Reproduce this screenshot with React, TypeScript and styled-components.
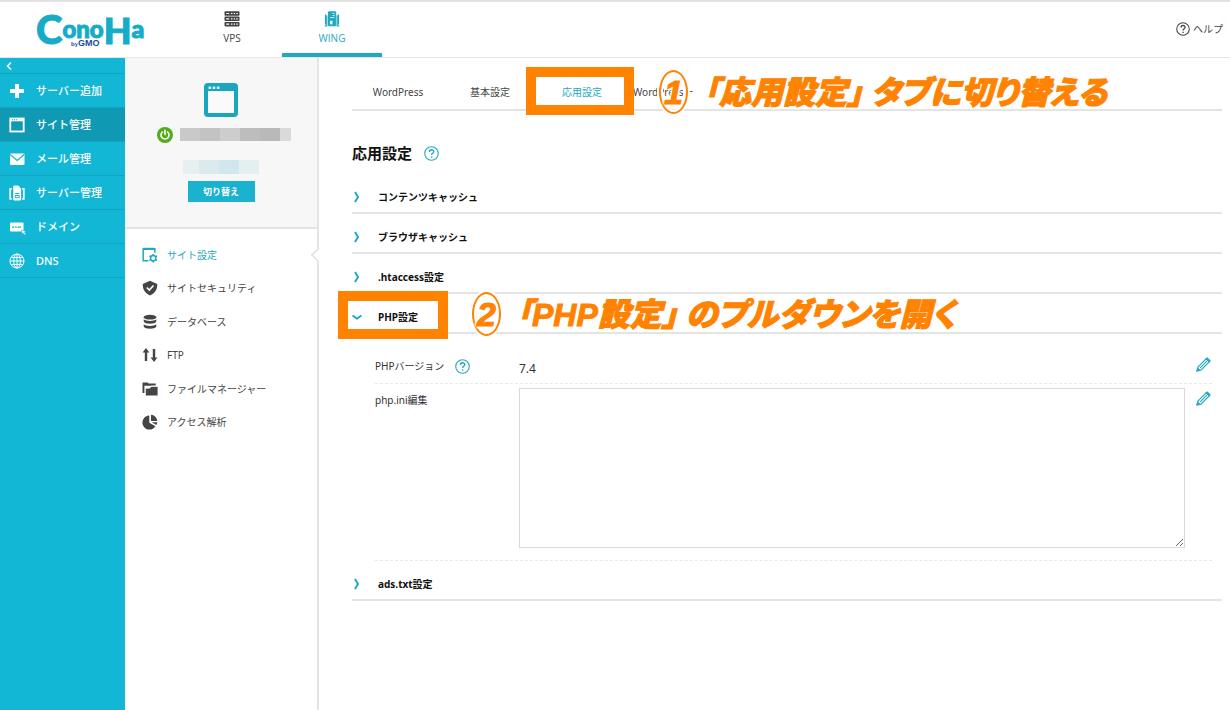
import React from 'react';
import styled, { createGlobalStyle } from 'styled-components';

const teal = '#1fa9c0';
const orange = '#ff8200';
const line = '#e4e4e4';
const jp = '"Noto Sans", "Noto Sans CJK JP", sans-serif';

const GlobalStyle = createGlobalStyle`
  *, *::before, *::after { box-sizing: border-box; }
  body { margin: 0; background: #fff; color: #333; font: 10px/16px ${jp}; }
  ul { list-style: none; margin: 0; padding: 0; }
  a { color: inherit; text-decoration: none; }
  button { font: inherit; color: inherit; background: none; border: 0; padding: 0; cursor: pointer; }
  svg { display: block; flex: none; }
`;

const Page = styled.div`
  min-height: 100vh;
  display: flex;
  flex-direction: column;
  overflow-x: hidden;
`;

const Header = styled.header`
  height: 58px;
  display: flex;
  align-items: stretch;
  border-top: 2px solid #e2e2e2;
  border-bottom: 1px solid #e6e6e6;
`;

const LogoLink = styled.a`
  width: 182px;
  padding: 0 0 0 36px;
`;

const ServiceNav = styled.nav`
  display: flex;
`;

const ServiceLink = styled.a<{ $active?: boolean }>`
  width: 100px;
  display: flex;
  flex-direction: column;
  align-items: center;
  gap: 3px;
  padding-top: 9px;
  color: ${p => (p.$active ? teal : '#444')};
  font-family: "Open Sans", "Noto Sans CJK JP", sans-serif;
  border-bottom: 4px solid ${p => (p.$active ? teal : 'transparent')};
`;

const HelpLink = styled.a`
  margin-left: auto;
  margin-right: 7px;
  padding-bottom: 2px;
  display: flex;
  align-items: center;
  gap: 3px;
  color: #444;
`;

const Body = styled.div`
  flex: 1;
  display: flex;
`;

const Sidebar = styled.nav`
  width: 125px;
  flex: none;
  background: #12b7d6;
  color: #fff;
`;

const Collapse = styled.button`
  display: flex;
  align-items: center;
  width: 100%;
  height: 16px;
  padding-left: 6px;
  border-bottom: 1px solid #10a5c1;
`;

const SideLink = styled.a<{ $active?: boolean }>`
  display: flex;
  align-items: center;
  gap: 11px;
  height: 34px;
  padding-left: 9px;
  border-bottom: 1px solid #10a5c1;
  background: ${p => (p.$active ? '#1099b3' : 'transparent')};
  font-size: 11px;
  font-weight: 500;
`;

const SitePanel = styled.aside`
  width: 194px;
  flex: none;
  border-right: 2px solid ${line};
`;

const SiteCard = styled.div`
  height: 171px;
  display: flex;
  flex-direction: column;
  align-items: center;
  padding-top: 25px;
  background: #f7f7f7;
  border-bottom: 2px solid ${line};
`;

const SiteStatus = styled.div`
  display: flex;
  align-items: center;
  gap: 7px;
  margin-top: 9px;
  padding-left: 6px;
  height: 17px;
`;

const Mosaic = styled.div<{ $height: number }>`
  display: flex;
  height: ${p => p.$height}px;
`;

const Tile = styled.span<{ $width: number; $tone: string }>`
  width: ${p => p.$width}px;
  background: ${p => p.$tone};
`;

const Alias = styled.div`
  margin: 17px 0 7px;
`;

const SwitchButton = styled.button`
  width: 67px;
  height: 21px;
  background: #1bb2cf;
  color: #fff;
  font-size: 9px;
  font-weight: 700;
`;

const SiteMenu = styled.ul`
  display: grid;
  height: 201px;
  margin-top: 9px;
`;

const SiteMenuItem = styled.li`
  position: relative;
  display: flex;
`;

const SiteMenuLink = styled.a<{ $active?: boolean }>`
  flex: 1;
  display: flex;
  align-items: center;
  gap: 9px;
  padding-left: 17px;
  color: ${p => (p.$active ? teal : '#444')};
`;

const Notch = styled.span`
  position: absolute;
  right: -8px;
  top: 11px;
  width: 12px;
  height: 12px;
  background: #fff;
  border: solid ${line};
  border-width: 0 0 2px 2px;
  transform: rotate(45deg);
  clip-path: polygon(0 0, 100% 100%, 0 100%);
`;

const Main = styled.main`
  flex: 1;
  min-width: 0;
  padding: 14px 8px 40px 33px;
`;

const Tabs = styled.nav`
  position: relative;
  display: flex;
  height: 39px;
  padding-top: 2px;
  border-bottom: 2px solid ${line};
`;

const Tab = styled.a<{ $active?: boolean }>`
  position: relative;
  min-width: 92px;
  display: flex;
  align-items: center;
  justify-content: center;
  white-space: nowrap;
  padding: 0 5px;
  color: ${p => (p.$active ? teal : '#444')};

  &:last-of-type { min-width: 0; }
`;

const Frame = styled.span`
  position: absolute;
  z-index: 1;
  left: -10px;
  top: -7px;
  width: 108px;
  height: 48px;
  border: 10px solid ${orange};
  pointer-events: none;
`;

const RowFrame = styled(Frame)`
  left: -14px;
  top: -3px;
  width: 110px;
`;

const Callout = styled.p<{ $left: number }>`
  position: absolute;
  z-index: 2;
  left: ${p => p.$left}px;
  top: -2px;
  display: flex;
  align-items: flex-start;
  margin: 0;
  color: ${orange};
  font: italic 900 32px/40px "Noto Sans CJK JP", sans-serif;
  font-feature-settings: "palt";
  white-space: nowrap;
  -webkit-text-stroke: 1px ${orange};
  text-shadow: 0 0 3px #fff, 2px 0 2px #fff, -2px 0 2px #fff, 0 2px 2px #fff, 0 -2px 2px #fff;
  pointer-events: none;
`;

const Step = styled.span`
  width: 29px;
  height: 44px;
  flex: none;
  margin-right: 15px;
  border: 2px solid ${orange};
  border-radius: 50%;
  box-shadow: 0 0 0 2px #fff, inset 0 0 0 2px #fff;
  text-align: center;
  font: italic 700 34px/40px "Liberation Sans", sans-serif;
`;

const Words = styled.span`
  margin-right: 8px;
`;

const Latin = styled.span`
  font-family: "Liberation Sans", sans-serif;
  font-weight: 700;
`;

const Title = styled.div`
  display: flex;
  align-items: center;
  gap: 12px;
  height: 24px;
  margin: 30px 0 9px;
`;

const Heading = styled.h1`
  margin: 0;
  color: #111;
  font-size: 15px;
  line-height: 24px;
  font-weight: 700;
`;

const HelpButton = styled.button`
  color: ${teal};
`;

const Section = styled.section`
  position: relative;
`;

const Toggle = styled.button`
  display: flex;
  align-items: center;
  gap: 16px;
  width: 100%;
  height: 40px;
  padding-top: 7px;
  border-bottom: 2px solid ${line};
  color: #111;
  font-weight: 700;
`;

const Details = styled.div`
  padding: 16px 10px 0 23px;
`;

const Field = styled.div`
  display: flex;
  align-items: flex-start;
  border-bottom: 1px dashed #e8e8e8;
`;

const FieldName = styled.div`
  width: 144px;
  flex: none;
  display: flex;
  align-items: center;
  gap: 11px;
  height: 32px;
`;

const FieldValue = styled.div`
  flex: 1;
  color: #333;
  font-size: 12px;
  line-height: 37px;
  height: 33px;
`;

const EditButton = styled.button`
  margin: 7px 1px 0 11px;
  color: ${teal};
`;

const IniText = styled.textarea`
  flex: 1;
  min-width: 0;
  height: 160px;
  margin: 4px 0 12px;
  padding: 8px;
  border: 1px solid #d8d8d8;
  background: #fff;
  resize: both;
  font: 10px/16px ${jp};
`;

const Logo = () => (
  <svg width="120" height="55" viewBox="0 0 120 55" role="img" aria-label="ConoHa by GMO">
    <text x="0" y="42" fill="#16acc8" stroke="#16acc8" strokeWidth="1" fontFamily="Lato" fontWeight="900" fontSize="40">
      C<tspan fontSize="24" dy="-6">ono</tspan><tspan fontSize="36" dy="6">H</tspan><tspan fontSize="25" dy="-6">a</tspan>
    </text>
    <text x="35" y="44" fontSize="6" fill="#1b4b9b" fontFamily="Liberation Sans" fontWeight="700" stroke="#fff" strokeWidth="2" paintOrder="stroke">
      by<tspan fontSize="9">GMO</tspan>
    </text>
  </svg>
);

const Question = ({ size }: { size: number }) => (
  <svg width={size} height={size} viewBox="0 0 16 16" fill="none" stroke="currentColor" strokeWidth="1.2">
    <circle cx="8" cy="8" r="7.2" />
    <path d="M5.8 6.3c0-3 4.6-3 4.6-.2 0 1.7-2.3 1.7-2.3 3.5" strokeWidth="1.5" />
    <path d="M8.1 11v1.5" strokeWidth="1.5" />
  </svg>
);

const VpsIcon = () => (
  <svg width="16" height="16" viewBox="0 0 16 16" fill="#444">
    {[0, 5.3, 10.6].map(y => (
      <g key={y}>
        <rect x=".5" y={y + 0.3} width="15" height="4.5" rx=".8" />
        <path d={`M2.2 ${y + 2.5}h3M7 ${y + 2.5}h1.4M9.6 ${y + 2.5}h1.4M12.2 ${y + 2.5}h1.6`} stroke="#fff" strokeWidth="1.2" />
      </g>
    ))}
  </svg>
);

const WingIcon = () => (
  <svg width="16" height="16" viewBox="0 0 16 16" fill="none" stroke="currentColor">
    <path d="M4.5 .8h7.2v14H4.5z" fill="currentColor" />
    <path d="M6 9.8h2.5v3.5H6z" fill="#fff" stroke="none" />
    <path d="M8.5 2.5h2M8.5 4.5h2M6 6.6h4.5" stroke="#fff" strokeOpacity=".75" />
    <path d="M2.8 4.5v10.3H.8M13.2 4.5v10.3h2" strokeWidth="1.2" />
    <path d="M1.6 3.5v10M14.4 3.5v10" strokeWidth="1.4" />
  </svg>
);

const ServerIcon = () => (
  <svg width="16" height="16" viewBox="0 0 16 16" fill="none" stroke="#fff">
    <path d="M4.8 1h4.4l2.4 2.4V15H4.8z" fill="#fff" />
    <path d="M6.2 8.5h4M6.2 10.5h4v2.2h-4z" stroke="#12b7d6" />
    <path d="M2.8 3.8H1.2v10h1.6M13.2 3.8h1.6v10h-1.6" strokeWidth="1.7" />
  </svg>
);

const PlusIcon = () => (
  <svg width="16" height="16" viewBox="0 0 16 16"><path d="M8 1v14M1 8h14" stroke="#fff" strokeWidth="4" /></svg>
);

const WindowIcon = () => (
  <svg width="16" height="16" viewBox="0 0 16 16" fill="none" stroke="#fff">
    <rect x="1.3" y="1.5" width="13.4" height="13" strokeWidth="1.8" />
    <path d="M1.5 3.2h13" strokeWidth="2.2" />
    <path d="M3 2.8h1M5 2.8h1M7 2.8h1" stroke="#1099b3" />
  </svg>
);

const MailIcon = () => (
  <svg width="16" height="16" viewBox="0 0 16 16">
    <rect x="1" y="2.5" width="14.5" height="11.5" rx="1" fill="#fff" />
    <path d="M1.2 3.6 8.2 9.4l7-5.8" fill="none" stroke="#12b7d6" strokeWidth="1.3" />
  </svg>
);

const DomainIcon = () => (
  <svg width="16" height="16" viewBox="0 0 16 16" overflow="visible">
    <rect x="1" y="3.5" width="13.5" height="9" rx="1" fill="#fff" />
    <path d="M3 8.2h2M5.7 8.2h2M8.4 8.2h3.6" stroke="#12b7d6" strokeWidth="1.2" />
    <path d="m12.5 10.8 4.5 1.7-1.7.7 1.7 1.8-1 1-1.7-1.8-.8 1.5z" fill="#fff" stroke="#12b7d6" strokeWidth=".5" />
  </svg>
);

const GlobeIcon = () => (
  <svg width="16" height="16" viewBox="0 0 16 16" fill="none" stroke="#fff" strokeWidth="1">
    <circle cx="8" cy="8" r="7" />
    <ellipse cx="8" cy="8" rx="3.3" ry="7" />
    <path d="M8 1v14M1 8h14M2 4.6h12M2 11.4h12" />
  </svg>
);

const SiteIcon = () => (
  <svg width="34" height="34" viewBox="0 0 34 34">
    <rect width="34" height="34" rx="4" fill="#1ba6c0" />
    <rect x="4" y="8" width="26" height="22" fill="#fafafa" />
    <path d="M4.5 4.7h2.6M8.7 4.7h2.6M12.9 4.7h2.6" stroke="#d9f3f8" strokeWidth="2.4" />
  </svg>
);

const PowerIcon = () => (
  <svg width="16" height="16" viewBox="0 0 16 16" fill="none" stroke="#fff" strokeWidth="1.6" strokeLinecap="round">
    <circle cx="8" cy="8" r="8" fill="#55aa1c" stroke="none" />
    <path d="M5.4 5a4 4 0 1 0 5.2 0M8 3.4v4.2" />
  </svg>
);

const SiteGearIcon = () => (
  <svg width="16" height="16" viewBox="0 0 16 16" fill="none" stroke="currentColor">
    <path d="M6.5 13.8H1.2V1.8h11.6v4" strokeWidth="1.5" />
    <path d="M1 1.9h12" strokeWidth="2.2" />
    <circle cx="11.2" cy="11.2" r="2.6" strokeWidth="1.5" />
    <path d="M11.2 6.9v1.6M11.2 13.9v1.7M7.4 9l1.4.8M13.6 12.6l1.4.8M7.4 13.4l1.4-.8M13.6 9.8 15 9" strokeWidth="1.6" />
  </svg>
);

const ShieldIcon = () => (
  <svg width="16" height="16" viewBox="0 0 16 16">
    <path d="M8 .8 15.3 4c0 5.8-2.3 9.2-7.3 11.4C3 13.2.7 9.8.7 4z" fill="#444" />
    <path d="m4.8 7.5 2.5 2.6 4.2-4.6" fill="none" stroke="#fff" strokeWidth="1.6" />
  </svg>
);

const DatabaseIcon = () => (
  <svg width="16" height="16" viewBox="0 0 16 16" fill="#444">
    <ellipse cx="8" cy="3.2" rx="6.3" ry="2.4" />
    <path d="M1.7 5.3c2 2.3 10.6 2.3 12.6 0v2.2c-1 3-11.6 3-12.6 0zM1.7 10.3c2 2.3 10.6 2.3 12.6 0v2.2c-1 3-11.6 3-12.6 0z" />
  </svg>
);

const FtpIcon = () => (
  <svg width="16" height="16" viewBox="0 0 16 16" fill="#444">
    <path d="M4 1 7.4 5.4H5.2V14H2.8V5.4H.6zM12 15l3.4-4.4h-2.2V2h-2.4v8.6H8.6z" />
  </svg>
);

const FilesIcon = () => (
  <svg width="16" height="16" viewBox="0 0 16 16" fill="#444">
    <path d="M.5 1.5h5l1.2 1h7v2.2H2.4V12H.5z" />
    <path d="M3.8 14.5V7.6h3.8l1.8-1.9h6.2v8.8z" />
    <path d="M4 6.9h3.4L9 5.1h6.6" fill="none" stroke="#fff" strokeWidth=".8" />
  </svg>
);

const PieIcon = () => (
  <svg width="16" height="16" viewBox="0 0 16 16" fill="#444">
    <path d="M7.3 1.6V8.7l6.1 3.5A7 7 0 1 1 7.3 1.6z" />
    <path d="M9 .8A6.6 6.6 0 0 1 15.3 7H9zM9.8 8.3h5.5a6 6 0 0 1-1 2.7z" />
  </svg>
);

const PencilIcon = () => (
  <svg width="15" height="15" viewBox="0 0 16 16" fill="none" stroke="currentColor" strokeWidth="1.2">
    <path d="M2 10.8 10.8 2l3.2 3.2L5.2 14l-4 .8zM4.5 11.5l7-7" />
    <path d="m11 1.8 1-.8 3 3-.8 1z" fill="currentColor" />
    <path d="m1 15 .8-3 2.2 2.2z" fill="currentColor" />
  </svg>
);

const Chevron = ({ open }: { open?: boolean }) => (
  <svg width="10" height="12" viewBox="0 0 10 12" fill="none" stroke={teal} strokeWidth="2">
    <path d={open ? 'M.5 4.5 5 7.5l4.5-3' : 'M3 1 6 6l-3 5'} />
  </svg>
);

const sideItems = [
  { label: 'サーバー追加', icon: <PlusIcon /> },
  { label: 'サイト管理', icon: <WindowIcon />, active: true },
  { label: 'メール管理', icon: <MailIcon /> },
  { label: 'サーバー管理', icon: <ServerIcon /> },
  { label: 'ドメイン', icon: <DomainIcon /> },
  { label: 'DNS', icon: <GlobeIcon /> },
];

const siteItems = [
  { label: 'サイト設定', icon: <SiteGearIcon />, active: true },
  { label: 'サイトセキュリティ', icon: <ShieldIcon /> },
  { label: 'データベース', icon: <DatabaseIcon /> },
  { label: 'FTP', icon: <FtpIcon /> },
  { label: 'ファイルマネージャー', icon: <FilesIcon /> },
  { label: 'アクセス解析', icon: <PieIcon /> },
];

const nameTiles: [number, string][] = [[20, '#c9c9c9'], [20, '#c3c3c3'], [20, '#cdcdcd'], [20, '#bdbdbd'], [20, '#b9b9b9'], [11, '#dadada']];
const aliasTiles: [number, string][] = [[16, '#e6f0f1'], [20, '#dceaed'], [20, '#d0e7ec'], [20, '#e3eff0']];

export default function App() {
  return (
    <Page>
      <GlobalStyle />
      <Header>
        <LogoLink href="#"><Logo /></LogoLink>
        <ServiceNav>
          <ServiceLink href="#vps"><VpsIcon />VPS</ServiceLink>
          <ServiceLink href="#wing" $active><WingIcon />WING</ServiceLink>
        </ServiceNav>
        <HelpLink href="#help"><Question size={14} />ヘルプ</HelpLink>
      </Header>
      <Body>
        <Sidebar>
          <Collapse aria-label="メニューを閉じる">
            <svg width="6" height="8" viewBox="0 0 6 8"><path d="M5 .5 1.5 4 5 7.5" fill="none" stroke="#fff" strokeWidth="1.5" /></svg>
          </Collapse>
          <ul>
            {sideItems.map(item => (
              <li key={item.label}>
                <SideLink href="#" $active={item.active}>{item.icon}{item.label}</SideLink>
              </li>
            ))}
          </ul>
        </Sidebar>
        <SitePanel>
          <SiteCard>
            <SiteIcon />
            <SiteStatus>
              <PowerIcon />
              <Mosaic $height={13}>
                {nameTiles.map(([w, c], i) => <Tile key={i} $width={w} $tone={c} />)}
              </Mosaic>
            </SiteStatus>
            <Alias>
              <Mosaic $height={14}>
                {aliasTiles.map(([w, c], i) => <Tile key={i} $width={w} $tone={c} />)}
              </Mosaic>
            </Alias>
            <SwitchButton>切り替え</SwitchButton>
          </SiteCard>
          <SiteMenu>
            {siteItems.map(item => (
              <SiteMenuItem key={item.label}>
                <SiteMenuLink href="#" $active={item.active}>{item.icon}{item.label}</SiteMenuLink>
                {item.active && <Notch />}
              </SiteMenuItem>
            ))}
          </SiteMenu>
        </SitePanel>
        <Main>
          <Tabs>
            <Tab href="#">WordPress</Tab>
            <Tab href="#">基本設定</Tab>
            <Tab href="#" $active>応用設定<Frame /></Tab>
            <Tab href="#">WordPressー</Tab>
            <Callout $left={307}>
              <Step>1</Step><Words>「応用設定」</Words>タブに切り替える
            </Callout>
          </Tabs>
          <Title>
            <Heading>応用設定</Heading>
            <HelpButton aria-label="応用設定のヘルプ"><Question size={15} /></HelpButton>
          </Title>
          <Section><Toggle><Chevron />コンテンツキャッシュ</Toggle></Section>
          <Section><Toggle><Chevron />ブラウザキャッシュ</Toggle></Section>
          <Section><Toggle><Chevron />.htaccess設定</Toggle></Section>
          <Section>
            <Toggle aria-expanded="true"><Chevron open />PHP設定</Toggle>
            <RowFrame />
            <Callout $left={120}>
              <Step>2</Step><Words>「<Latin>PHP</Latin>設定」</Words>のプルダウンを開く
            </Callout>
            <Details>
              <Field>
                <FieldName>PHPバージョン<HelpButton aria-label="PHPバージョンのヘルプ"><Question size={15} /></HelpButton></FieldName>
                <FieldValue>7.4</FieldValue>
                <EditButton aria-label="PHPバージョンを編集"><PencilIcon /></EditButton>
              </Field>
              <Field>
                <FieldName as="label" htmlFor="php-ini">php.ini編集</FieldName>
                <IniText id="php-ini" />
                <EditButton aria-label="php.iniを編集"><PencilIcon /></EditButton>
              </Field>
            </Details>
          </Section>
          <Section><Toggle><Chevron />ads.txt設定</Toggle></Section>
        </Main>
      </Body>
    </Page>
  );
}
